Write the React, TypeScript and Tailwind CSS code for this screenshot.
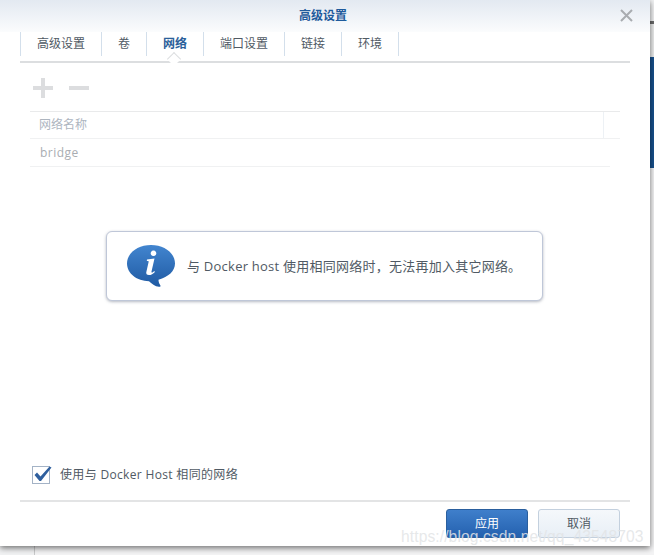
const cjk = `font-['Open_Sans','Noto_Sans_CJK_SC',sans-serif]`;

const tabs = [
  { label: "高级设置", w: "w-[81px]" },
  { label: "卷", w: "w-[45px]" },
  { label: "网络", w: "w-[57px]", active: true },
  { label: "端口设置", w: "w-[81px]" },
  { label: "链接", w: "w-[57px]" },
  { label: "环境", w: "w-[57px]" },
];

function InfoBubble() {
  return (
    <svg width="50" height="44" viewBox="0 0 50 44" className="shrink-0">
      <defs>
        <linearGradient id="bub" x1="0" y1="0" x2="0" y2="1">
          <stop offset="0" stopColor="#4285cf" />
          <stop offset="1" stopColor="#1f5aa3" />
        </linearGradient>
      </defs>
      <path
        d="M25 1C11.5 1 1 9 1 19.5C1 29.5 11 37 23 37.2C25.5 39.5 29 42.5 33 42.8C34.5 42.9 34.8 42 34.2 41C33 39.3 32.5 37.5 32.5 35.7C42.5 33 49 27 49 19.5C49 9 38.5 1 25 1Z"
        fill="url(#bub)"
      />
      <path
        d="M27.5 6.5a2.8 2.8 0 1 1-.01 0ZM21 15.5l7.5-1-3 13c-.2 1 .3 1.3 1 .9l1.8-1.3.6.8c-1.8 2-3.8 3.2-6 3.2-2.3 0-3-1.3-2.5-3.4l2.2-9.8c.2-.8-.1-1-1.8-1Z"
        fill="#fff"
      />
    </svg>
  );
}

export default function App() {
  return (
    <div className={`flex h-[555px] w-[654px] overflow-hidden bg-[#f1f2f3] ${cjk}`}>
      <div className="flex h-[555px] w-[650px] shrink-0 flex-col">
        <div className="relative z-10 flex h-[546px] w-[650px] shrink-0 flex-col bg-white shadow-[0_2px_6px_rgba(0,0,0,0.55)]">
          {/* title bar */}
          <div className="flex h-[32px] shrink-0 items-center justify-center bg-gradient-to-b from-[#e3e9f1] to-[#fbfcfd] pr-[4px]">
            <span className="text-[12px] font-bold text-[#1e5a9c]">高级设置</span>
          </div>
          <button className="absolute right-[17px] top-[9px] text-[#a9acb0]" aria-label="关闭">
            <svg width="13" height="13" viewBox="0 0 13 13" className="block">
              <path d="M1 1L12 12M12 1L1 12" stroke="currentColor" strokeWidth="2" fill="none" />
            </svg>
          </button>

          {/* tabs */}
          <div className="relative ml-[20px] mr-[20px] flex h-[31px] shrink-0 items-start border-b-2 border-[#dcdee0]">
            <div className="flex h-[24px] border-l border-[#d3dfeb]">
              {tabs.map((t) => (
                <div
                  key={t.label}
                  className={`relative flex h-[24px] items-center justify-center border-r border-[#d3dfeb] text-[12px] ${t.w} ${
                    t.active ? "font-bold text-[#2b5f9a]" : "text-[#505a64]"
                  }`}
                >
                  {t.label}
                  {t.active && (
                    <span className="absolute left-[22px] top-[22px] h-[10px] w-[10px] rotate-45 border-l border-t border-[#dcdee0] bg-white" />
                  )}
                </div>
              ))}
            </div>
          </div>

          {/* toolbar */}
          <div className="ml-[33px] flex h-[48px] shrink-0 items-center gap-[16px] pt-[2px]">
            <svg width="20" height="20" viewBox="0 0 20 20" className="block">
              <path d="M8 0h4v8h8v4h-8v8H8v-8H0V8h8Z" fill="#dcdddf" />
            </svg>
            <svg width="20" height="20" viewBox="0 0 20 20" className="block">
              <rect x="0" y="8" width="20" height="4" fill="#dcdddf" />
            </svg>
          </div>

          {/* grid */}
          <div className="ml-[30px] mr-[30px] flex h-[28px] shrink-0 border-y border-t-[#e9eaeb] border-b-[#f0f1f2]">
            <div className="flex flex-1 items-center pl-[9px] text-[12px] text-[#adb5bf]">网络名称</div>
            <div className="w-[17px] border-l border-[#edf1f5]" />
          </div>
          <div className="ml-[30px] mr-[40px] flex h-[28px] shrink-0 items-center border-b border-[#f0f1f2] pl-[10px] text-[12px] tracking-[0.45px] text-[#a9adb2]">
            bridge
          </div>

          {/* message */}
          <div className="flex h-[298px] shrink-0 items-start pl-[106px] pt-[64px]">
            <div className="flex h-[70px] w-[437px] items-center rounded-[6px] border border-[#bfc7d8] bg-white pl-[19px] shadow-[0_1px_3px_rgba(90,100,120,0.45)]">
              <InfoBubble />
              <span className="ml-[11px] whitespace-nowrap pt-[2px] text-[13px] tracking-[0.24px] text-[#505a64]">
                与 Docker host 使用相同网络时，无法再加入其它网络。
              </span>
            </div>
          </div>

          {/* checkbox */}
          <div className="ml-[32px] flex h-[19px] shrink-0 items-center">
            <span className="relative h-[18px] w-[18px] border border-[#a4b3c6] bg-white">
              <svg width="20" height="17" viewBox="0 0 20 17" className="absolute left-[0px] top-[-1px]">
                <path d="M1.5 9L4 6.5L7.5 10.5L16.5 0.5L18.5 1.5L8 15H6.5Z" fill="#2f5f9e" />
              </svg>
            </span>
            <span className="ml-[10px] whitespace-nowrap text-[12px] tracking-[0.33px] text-[#505a64]">
              使用与 Docker Host 相同的网络
            </span>
          </div>

          {/* footer */}
          <div className="ml-[20px] mr-[20px] mt-[16px] flex flex-1 items-start justify-end border-t-2 border-[#e3e4e5] pr-[10px] pt-[7px]">
            <button className="h-[29px] w-[82px] rounded-[3px] border border-[#2a5f9e] bg-gradient-to-b from-[#3f7fcb] to-[#2461af] pt-[1px] text-[12px] text-white">
              应用
            </button>
            <button className="ml-[10px] h-[29px] w-[82px] rounded-[3px] border border-[#c3d0de] bg-gradient-to-b from-[#f5f8fb] to-[#e8eff6] pt-[1px] text-[12px] text-[#505a64]">
              取消
            </button>
          </div>

          <span className="pointer-events-none absolute left-[401px] top-[528px] z-20 whitespace-nowrap font-['Liberation_Sans',sans-serif] text-[15.6px] leading-[18px] tracking-[0.1px] text-[#e2e4e6]/85">
            https://blog.csdn.net/qq_43548703
          </span>
        </div>
        <div className="ml-[34px] flex-1 border-l border-[#c8c9ca] bg-[#f4f4f5]" />
      </div>
      <div className="flex w-[4px] shrink-0 flex-col">
        <div className="h-[21px] bg-[#f1f2f3]" />
        <div className="h-[3px] bg-[#6a6a6a]" />
        <div className="h-[33px] bg-[#eceded]" />
        <div className="h-[111px] bg-[#17508c]" />
        <div className="flex-1 bg-[#f4f4f5]" />
      </div>
    </div>
  );
}
